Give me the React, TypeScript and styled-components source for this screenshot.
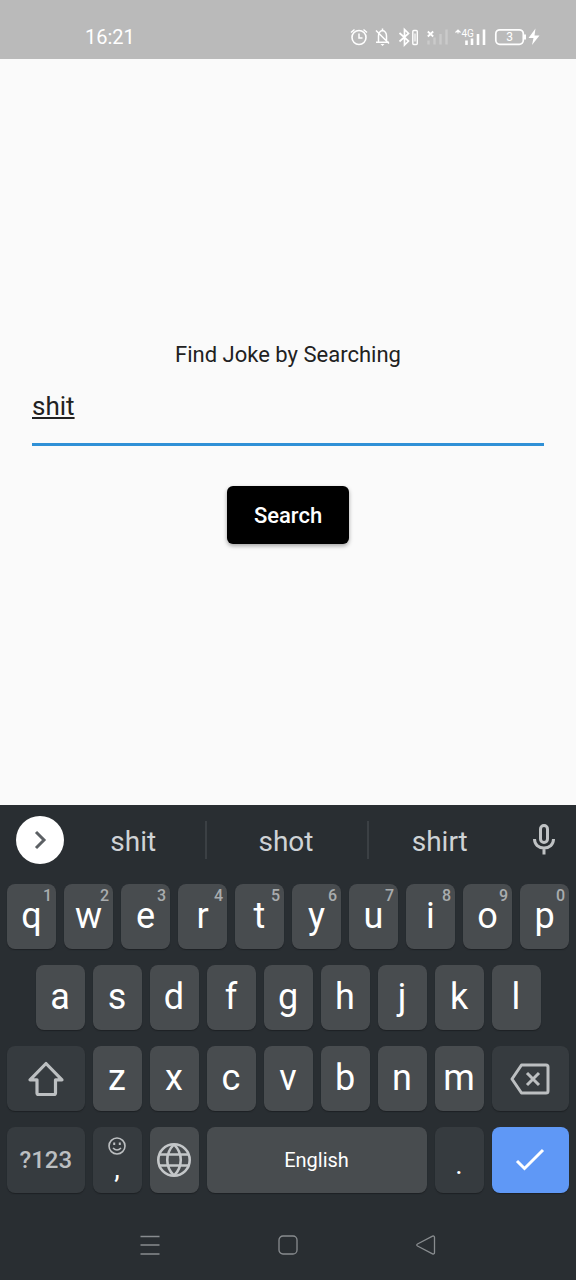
import React, { useState } from 'react';
import styled, { createGlobalStyle, css } from 'styled-components';

const GlobalStyle = createGlobalStyle`
  *, *::before, *::after { box-sizing: border-box; }
  body { margin: 0; background: #fafafa; font-family: Roboto, "Liberation Sans", sans-serif; }
  button, input { font: inherit; }
`;

const Screen = styled.div`
  display: flex;
  flex-direction: column;
  min-height: 100vh;
`;

const StatusBar = styled.header`
  display: flex;
  align-items: center;
  justify-content: space-between;
  height: 59px;
  padding: 15px 36px 0 85px;
  background: #bababa;
  color: #fff;
`;

const Clock = styled.time`
  font-size: 20px;
  line-height: 24px;
`;

const StatusIcons = styled.svg`
  display: block;
  width: 192px;
  height: 24px;
`;

const IndicatorText = styled.text<{ $size: number }>`
  font-size: ${({ $size }) => $size}px;
  font-weight: 400;
  fill: #fff;
`;

const Main = styled.main`
  flex: 1;
  display: flex;
  flex-direction: column;
  align-items: center;
  justify-content: center;
  padding: 22px 32px 0;
`;

const SearchForm = styled.form`
  display: flex;
  flex-direction: column;
  align-items: center;
  width: 100%;
`;

const Label = styled.label`
  font-size: 22px;
  line-height: 26px;
  color: #212121;
`;

const TextInput = styled.input`
  width: 100%;
  height: 68px;
  margin: 10px 0 40px;
  padding: 0 0 10px;
  border: 0;
  border-bottom: 3px solid #2f90d6;
  border-radius: 0;
  outline: 0;
  background: transparent;
  color: #212121;
  font-size: 26px;
  line-height: 30px;
  text-decoration: underline;
  text-decoration-thickness: 2px;
  text-underline-offset: 2px;
`;

const SearchButton = styled.button`
  height: 58px;
  padding: 0 27px;
  border: 0;
  border-radius: 6px;
  background: #000;
  color: #fff;
  font-size: 22px;
  font-weight: 500;
  box-shadow: 0 2px 4px rgba(0, 0, 0, 0.35);
`;

const Keyboard = styled.section`
  background: #292e32;
`;

const SuggestionBar = styled.div`
  display: flex;
  align-items: center;
  height: 79px;
  padding: 0 16px 9px;
`;

const ExpandButton = styled.button`
  display: grid;
  place-items: center;
  flex: none;
  width: 48px;
  height: 48px;
  padding: 0;
  border: 0;
  border-radius: 50%;
  background: #fff;
  color: #5c6064;
`;

const Suggestions = styled.div`
  flex: 1;
  display: grid;
  grid-template-columns: 7fr 8fr 7fr;
  margin-right: 16px;
`;

const Suggestion = styled.button`
  height: 38px;
  padding: 4px 2px 0 0;
  border: 0;
  border-right: 2px solid #3b4044;
  background: transparent;
  color: #cfd3d6;
  font-size: 28px;
  line-height: 32px;
  &:last-child { border-right: 0; }
`;

const MicButton = styled.button`
  flex: none;
  width: 32px;
  height: 40px;
  padding: 0;
  border: 0;
  background: transparent;
  color: #bfc2c4;
`;

const Icon = styled.svg`
  display: block;
  overflow: visible;
  fill: none;
  stroke: currentColor;
`;

const Keys = styled.div`
  display: flex;
  flex-direction: column;
  gap: 16px;
  padding: 0 7px;
`;

const KeyRow = styled.div`
  display: flex;
  justify-content: center;
  gap: 8px;
  height: 65px;
  &:last-child { height: 66px; }
`;

type KeyTone = 'letter' | 'dark' | 'accent';
const tones: Record<KeyTone, string> = { letter: '#484c4f', dark: '#363b3f', accent: '#5f98f6' };

const Key = styled.button<{ $tone?: KeyTone; $span?: number }>`
  position: relative;
  display: flex;
  flex-direction: column;
  align-items: center;
  justify-content: center;
  ${({ $span = 1 }) =>
    $span === 0
      ? css`flex: 1;`
      : css`flex: none; width: calc((100% - 72px) / 10 * ${$span} + ${8 * ($span - 1)}px);`}
  padding: 0;
  border: 0;
  border-radius: 8px;
  background: ${({ $tone = 'letter' }) => tones[$tone]};
  box-shadow: 0 1px 1px #1d2124;
  color: #fff;
`;

const Letter = styled.span`
  font-size: 36px;
  line-height: 42px;
  padding-bottom: 2px;
`;

const Hint = styled.span`
  position: absolute;
  top: 3px;
  right: 4px;
  font-size: 16px;
  line-height: 18px;
  font-weight: 500;
  color: #a9acae;
`;

const KeyLabel = styled.span<{ $size: number; $muted?: boolean }>`
  font-size: ${({ $size }) => $size}px;
  line-height: 28px;
  font-weight: ${({ $muted }) => ($muted ? 500 : 400)};
  color: ${({ $muted }) => ($muted ? '#bcbfc1' : '#fff')};
`;

const Punctuation = styled.span`
  font-size: 28px;
  line-height: 28px;
`;

const DotKey = styled(Key)`
  justify-content: flex-end;
  padding-bottom: 14px;
`;

const CommaKey = styled(Key)`
  justify-content: space-between;
  padding: 10px 0 14px;
  color: #bcbfc1;
  ${Punctuation} { color: #fff; }
`;

const MutedKey = styled(Key)`
  color: #bcbfc1;
`;

const NavBar = styled.nav`
  display: flex;
  justify-content: center;
  align-items: center;
  gap: 106px;
  height: 87px;
  padding-top: 16px;
`;

const NavButton = styled.button`
  display: grid;
  place-items: center;
  width: 32px;
  height: 32px;
  padding: 0;
  border: 0;
  background: transparent;
  color: #888c8f;
`;

const topRow = 'qwertyuiop'.split('');
const homeRow = 'asdfghjkl'.split('');
const bottomRow = 'zxcvbnm'.split('');

function StatusGlyphs() {
  return (
    <StatusIcons viewBox="348 25 192 24" fill="none" stroke="#fff" role="img" aria-label="Phone status">
      {/* alarm */}
      <circle cx="359" cy="37.500" r="7" strokeWidth="1.600" />
      <path d="M359 33.500v4.500h3.500M351 32.500l3.500-3M367 32.500l-3.500-3" strokeWidth="1.500" />
      {/* muted bell */}
      <path d="M378.500 41.500V36q0-4.500 4-5.500 4 1 4 5.500v5.500M376 42.200h13M382.500 30.500v-2M376 30.500l13 13" strokeWidth="1.500" />
      <path d="M380.500 44h4l-2 2z" fill="#fff" stroke="none" />
      {/* bluetooth with battery */}
      <path d="M399.500 33l9 8-4 4V29.500l4 4-9 8" strokeWidth="1.700" />
      <rect x="412.800" y="30.500" width="4.500" height="14" rx="1" strokeWidth="1.400" />
      <path d="M415 33.500v8" strokeWidth="1.200" />
      {/* first SIM, no signal */}
      <path d="M427.800 31.500l5.400 5M433.200 31.500l-5.400 5" strokeWidth="1.800" />
      <g stroke="#cacaca" strokeWidth="2.400">
        <path d="M428.500 40.500v4M434.500 37.500v7M440.500 34v10.500M446.500 29.500v15" />
      </g>
      {/* second SIM */}
      <path d="M455.500 32.500l2.500-2.500 2.500 2.500M458 30.500v3" strokeWidth="1.200" />
      <IndicatorText x="461.500" y="37" $size={10} stroke="none">4G</IndicatorText>
      <path d="M466.500 40.500v4.500M472 38.500v6.500M478 34v11M484 29.500v15.500" strokeWidth="2.600" />
      {/* battery */}
      <rect x="495.800" y="29.800" width="27.500" height="14.500" rx="4" strokeWidth="1.700" />
      <path d="M525 34.500v5" strokeWidth="2" />
      <IndicatorText x="509.500" y="41" $size={12} textAnchor="middle" stroke="none">3</IndicatorText>
      <path d="M535.500 28.500l-7 9.500h5l-1.500 7 7.500-9.500h-5z" fill="#fff" stroke="none" />
    </StatusIcons>
  );
}

export default function App() {
  const [query, setQuery] = useState('shit');
  const type = (character: string) => setQuery((value) => value + character);

  return (
    <Screen>
      <GlobalStyle />
      <StatusBar>
        <Clock>16:21</Clock>
        <StatusGlyphs />
      </StatusBar>

      <Main>
        <SearchForm onSubmit={(event) => event.preventDefault()}>
          <Label htmlFor="query">Find Joke by Searching</Label>
          <TextInput
            id="query"
            type="text"
            spellCheck={false}
            autoComplete="off"
            value={query}
            onChange={(event) => setQuery(event.target.value)}
          />
          <SearchButton type="submit">Search</SearchButton>
        </SearchForm>
      </Main>

      <Keyboard aria-label="Keyboard">
        <SuggestionBar>
          <ExpandButton type="button" aria-label="More tools">
            <Icon width="24" height="24" viewBox="0 0 24 24" strokeWidth="3">
              <path d="M8 4l8 8-8 8" />
            </Icon>
          </ExpandButton>
          <Suggestions>
            {['shit', 'shot', 'shirt'].map((word) => (
              <Suggestion key={word} type="button" onClick={() => setQuery(word)}>{word}</Suggestion>
            ))}
          </Suggestions>
          <MicButton type="button" aria-label="Voice input">
            <Icon width="32" height="40" viewBox="0 0 32 40" strokeWidth="3">
              <rect x="12.500" y="5.500" width="7" height="17" rx="3.500" />
              <path d="M6.500 19c0 5.500 4 9 9.500 9s9.500-3.500 9.500-9M16 28v6.500" />
            </Icon>
          </MicButton>
        </SuggestionBar>

        <Keys>
          <KeyRow>
            {topRow.map((letter, index) => (
              <Key key={letter} type="button" onClick={() => type(letter)}>
                <Letter>{letter}</Letter>
                <Hint>{(index + 1) % 10}</Hint>
              </Key>
            ))}
          </KeyRow>
          <KeyRow>
            {homeRow.map((letter) => (
              <Key key={letter} type="button" onClick={() => type(letter)}>
                <Letter>{letter}</Letter>
              </Key>
            ))}
          </KeyRow>
          <KeyRow>
            <MutedKey type="button" $tone="dark" $span={0} aria-label="Shift">
              <Icon width="38" height="38" viewBox="0 0 38 38" strokeWidth="3.200" strokeLinejoin="round">
                <path d="M19 3.500L35 19.800h-6.500V33q0 1.500-1.500 1.500H11.500Q10 34.500 10 33V19.800H3z" />
              </Icon>
            </MutedKey>
            {bottomRow.map((letter) => (
              <Key key={letter} type="button" onClick={() => type(letter)}>
                <Letter>{letter}</Letter>
              </Key>
            ))}
            <MutedKey type="button" $tone="dark" $span={0} aria-label="Delete" onClick={() => setQuery((value) => value.slice(0, -1))}>
              <Icon width="40" height="34" viewBox="0 0 40 34" strokeWidth="3" strokeLinejoin="round">
                <path d="M11.500 3H36q2 0 2 2v24q0 2-2 2H11.500L2 17zM17 11l12 12M29 11L17 23" />
              </Icon>
            </MutedKey>
          </KeyRow>
          <KeyRow>
            <MutedKey type="button" $tone="dark" $span={0}>
              <KeyLabel $size={24} $muted>?123</KeyLabel>
            </MutedKey>
            <CommaKey type="button" $tone="dark" aria-label="Comma or emoji" onClick={() => type(',')}>
              <Icon width="18" height="18" viewBox="0 0 18 18" strokeWidth="1.600">
                <circle cx="9" cy="9" r="8" />
                <path d="M5 11q4 4 8 0" />
                <path d="M6.200 5.500v2.500M11.800 5.500v2.500" strokeWidth="2" />
              </Icon>
              <Punctuation>,</Punctuation>
            </CommaKey>
            <Key type="button" aria-label="Change language">
              <Icon width="36" height="36" viewBox="0 0 36 36" strokeWidth="2.600" color="#c4c7c9">
                <circle cx="18" cy="18" r="15.700" />
                <path d="M3.500 12.500h29M3.500 23.500h29M18 2.300c-9 9-9 22.400 0 31.400M18 2.300c9 9 9 22.400 0 31.400" />
              </Icon>
            </Key>
            <Key type="button" $span={4} aria-label="Space, English" onClick={() => type(' ')}>
              <KeyLabel $size={20}>English</KeyLabel>
            </Key>
            <DotKey type="button" $tone="dark" onClick={() => type('.')}>
              <Punctuation>.</Punctuation>
            </DotKey>
            <Key type="button" $tone="accent" $span={0} aria-label="Done">
              <Icon width="30" height="24" viewBox="0 0 30 24" strokeWidth="3">
                <path d="M2 13l7.500 7.500L28 2" />
              </Icon>
            </Key>
          </KeyRow>
        </Keys>

        <NavBar aria-label="System navigation">
          <NavButton type="button" aria-label="Recent apps">
            <Icon width="20" height="20" viewBox="0 0 20 20" strokeWidth="1.500">
              <path d="M.5 1.500h19M.5 10h19M.5 19h19" />
            </Icon>
          </NavButton>
          <NavButton type="button" aria-label="Home">
            <Icon width="20" height="20" viewBox="0 0 20 20" strokeWidth="1.300">
              <rect x="1" y="1" width="18" height="18" rx="4" />
            </Icon>
          </NavButton>
          <NavButton type="button" aria-label="Back">
            <Icon width="20" height="20" viewBox="0 0 20 20" strokeWidth="1.300" strokeLinejoin="round">
              <path d="M1.500 9Q0 10 1.500 11L16.500 18.800Q18.500 19.500 18.500 17.500V2.500Q18.500.5 16.500 1.200Z" />
            </Icon>
          </NavButton>
        </NavBar>
      </Keyboard>
    </Screen>
  );
}
